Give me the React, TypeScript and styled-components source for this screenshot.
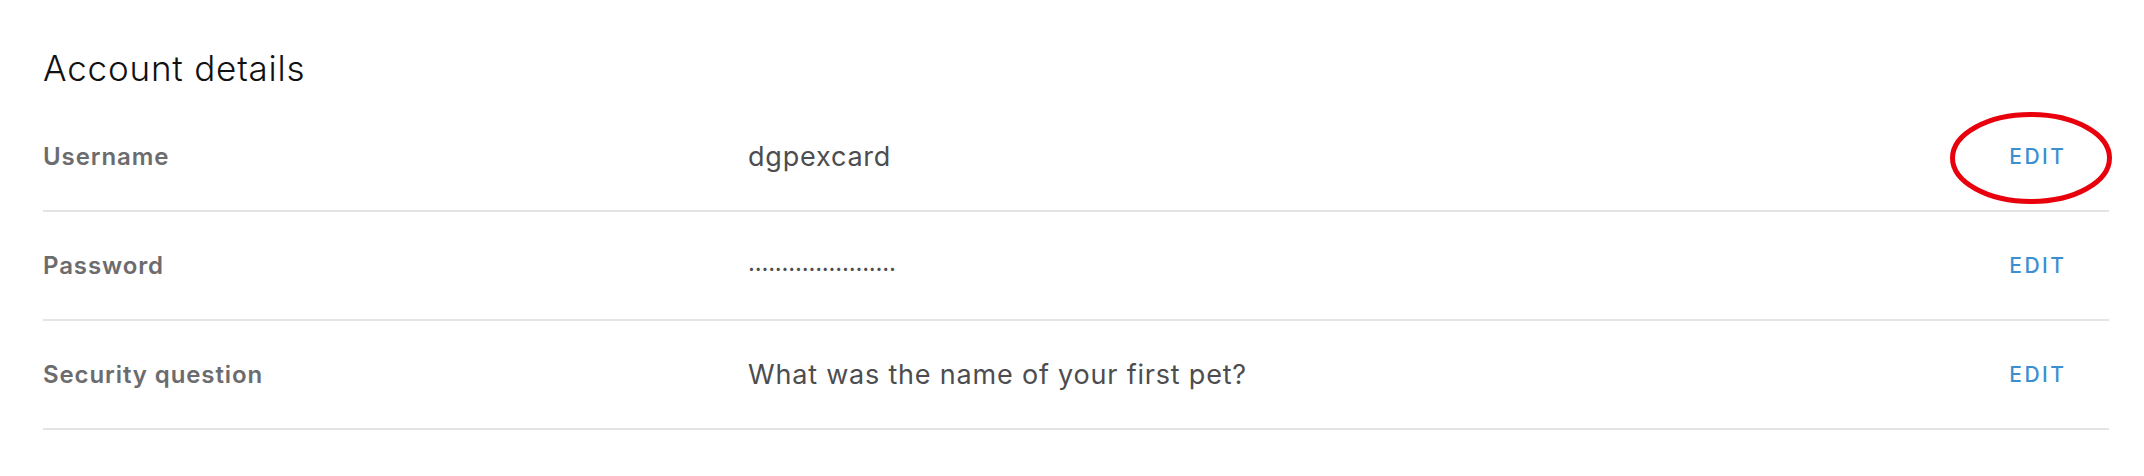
import React from "react";
import styled, { createGlobalStyle } from "styled-components";

const GlobalStyle = createGlobalStyle`
  html, body { margin: 0; padding: 0; background: #ffffff; }
  body { font-family: Inter, "Noto Sans", sans-serif; -webkit-font-smoothing: antialiased; }
`;

const Page = styled.section`
  padding: 47px 35px 0 43px;
  background: #ffffff;
`;

const Heading = styled.h2`
  margin: 0 0 14px 0;
  font-family: Inter, sans-serif;
  font-weight: 300;
  font-size: 35px;
  line-height: 42px;
  letter-spacing: 0.8px;
  color: #111111;
`;

const List = styled.div`
  display: flex;
  flex-direction: column;
`;

const Row = styled.div`
  display: grid;
  grid-template-columns: 705px 1fr auto;
  align-items: center;
  height: 107px;
  padding-right: 45px;
  border-bottom: 2px solid #e4e4e4;
`;

const Label = styled.div`
  font-family: Inter, sans-serif;
  font-weight: 600;
  font-size: 24px;
  line-height: 29px;
  letter-spacing: 0.9px;
  color: #6c6c6e;
`;

const Value = styled.div<{ $secret?: boolean }>`
  font-family: Inter, sans-serif;
  font-weight: 400;
  font-size: ${(p) => (p.$secret ? "24px" : "27px")};
  line-height: 32px;
  letter-spacing: ${(p) => (p.$secret ? "-0.2px" : "0.8px")};
  color: #4d4d4f;
  transform: ${(p) => (p.$secret ? "translateY(-3px)" : "none")};
`;

const EditButton = styled.button`
  position: relative;
  border: 0;
  background: none;
  padding: 0;
  margin: 0;
  cursor: pointer;
  font-family: Inter, sans-serif;
  font-weight: 500;
  font-size: 21px;
  line-height: 24px;
  letter-spacing: 2.5px;
  margin-right: -2.5px;
  color: #3b8fd0;
`;

const Highlight = styled.svg`
  position: absolute;
  left: -60px;
  top: -34px;
  width: 164px;
  height: 94px;
  overflow: visible;
  pointer-events: none;
`;

const rows = [
  { label: "Username", value: "dgpexcard", circled: true },
  { label: "Password", value: "......................", secret: true },
  { label: "Security question", value: "What was the name of your first pet?" },
];

export default function App() {
  return (
    <>
      <GlobalStyle />
      <Page>
        <Heading>Account details</Heading>
        <List>
          {rows.map((r) => (
            <Row key={r.label}>
              <Label>{r.label}</Label>
              <Value $secret={r.secret}>{r.value}</Value>
              <EditButton>
                EDIT
                {r.circled && (
                  <Highlight viewBox="0 0 164 94">
                    <ellipse
                      cx="82"
                      cy="47"
                      rx="78.5"
                      ry="43.5"
                      fill="none"
                      stroke="#e8000c"
                      strokeWidth="5"
                    />
                  </Highlight>
                )}
              </EditButton>
            </Row>
          ))}
        </List>
      </Page>
    </>
  );
}
